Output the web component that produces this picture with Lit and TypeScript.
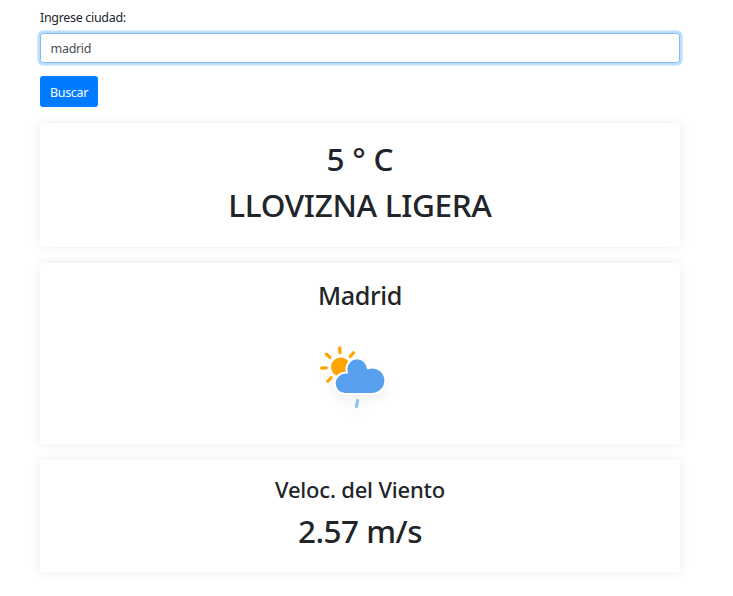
import { LitElement, html, css, svg } from "lit";
import { customElement, property } from "lit/decorators.js";

const RAYS = [0, 45, 90, 135, 180, 225, 270, 315];

@customElement("weather-icon")
class WeatherIcon extends LitElement {
  static styles = css`
    :host {
      display: block;
      width: 102.4px;
      height: 102.4px;
    }
    svg {
      display: block;
      width: 100%;
      height: 100%;
      overflow: visible;
    }
    .art {
      filter: drop-shadow(0 4px 3px rgba(0, 0, 0, 0.05));
    }
  `;
  render() {
    return html`<svg viewBox="0 0 64 64" aria-hidden="true">
      <g class="art">
        <g transform="translate(19.8 26.9) rotate(-3)">
          ${RAYS.map(
            (a) => svg`<line transform="rotate(${a})" y1="9" y2="12" stroke="#ffa500" stroke-width="2" stroke-linecap="round" />`
          )}
          <circle r="6" fill="#ffa500" />
        </g>
        <path
          d="M47.7,35.4c0-4.6-3.7-8.2-8.2-8.2c-1,0-1.9,0.2-2.8,0.5c-0.3-3.4-3.1-6.2-6.6-6.2c-3.7,0-6.7,3-6.7,6.7c0,0.8,0.2,1.6,0.4,2.3c-0.3-0.1-0.7-0.1-1-0.1c-3.7,0-6.7,3-6.7,6.7c0,3.6,2.9,6.6,6.5,6.7l17.2,0C44.2,43.3,47.7,39.8,47.7,35.4z"
          fill="#57a0ee"
          stroke="#fff"
          stroke-width="1.2"
          stroke-linejoin="round"
        />
        <line x1="30.4" y1="47.8" x2="29.6" y2="51.6" stroke="#91c0f8" stroke-width="2" stroke-linecap="round" />
      </g>
    </svg>`;
  }
}

@customElement("app-root")
class AppRoot extends LitElement {
  @property() query = "madrid";

  static styles = css`
    :host {
      display: block;
      box-sizing: border-box;
      width: 733px;
      height: 596px;
      overflow: hidden;
      background: #fff;
      color: #212529;
      font: 400 12.8px/19.2px "Noto Sans", "Open Sans", sans-serif;
    }
    * {
      box-sizing: border-box;
    }
    main {
      width: 640px;
      margin-left: 40px;
      padding-top: 8px;
    }
    form {
      display: flex;
      flex-direction: column;
      align-items: flex-start;
    }
    label {
      height: 25px;
      font-size: 12.5px;
      letter-spacing: -0.32px;
    }
    input {
      width: 640px;
      height: 30px;
      padding: 0 9.6px;
      border: 1px solid #80bdff;
      border-radius: 3.2px;
      outline: 0;
      background: #fff;
      color: #495057;
      font: inherit;
      font-size: 12.5px;
      letter-spacing: -0.32px;
      box-shadow: 0 0 0 2.6px rgba(0, 123, 255, 0.25);
    }
    button {
      width: 58px;
      height: 31px;
      margin: 13px 0 16px;
      padding: 2px 0 0;
      border: 0;
      border-radius: 3.2px;
      background: #007bff;
      color: #fff;
      font: inherit;
      font-size: 12.5px;
      letter-spacing: -0.35px;
    }
    .card {
      display: flex;
      flex-direction: column;
      align-items: center;
      margin-bottom: 16px;
      border-radius: 3.2px;
      background: #fff;
      box-shadow: 0 0 12px rgba(0, 0, 0, 0.08);
      white-space: nowrap;
    }
    .now {
      height: 124px;
      padding-top: 17px;
    }
    .city {
      height: 181px;
      padding-top: 17px;
    }
    .wind {
      height: 112px;
      padding-top: 16px;
    }
    h1,
    h2,
    h3 {
      margin: 0;
      font-weight: 500;
    }
    h1 {
      font-size: 31.5px;
      line-height: 38px;
    }
    .now h1 + h1 {
      margin-top: 8px;
    }
    .temp {
      letter-spacing: -0.2px;
    }
    .sky {
      letter-spacing: -0.33px;
    }
    .speed {
      letter-spacing: -0.5px;
    }
    h2 {
      font-size: 25.2px;
      line-height: 31px;
      letter-spacing: -0.4px;
    }
    h3 {
      font-size: 22px;
      line-height: 27px;
      margin-bottom: 9px;
      letter-spacing: -0.2px;
    }
    weather-icon {
      margin-top: 13.4px;
    }
  `;

  render() {
    return html`<main>
      <form @submit=${(e: Event) => e.preventDefault()}>
        <label for="city">Ingrese ciudad:</label>
        <input id="city" .value=${this.query} autocomplete="off" spellcheck="false" />
        <button type="submit">Buscar</button>
      </form>
      <section class="card now">
        <h1 class="temp">5 ° C</h1>
        <h1 class="sky">LLOVIZNA LIGERA</h1>
      </section>
      <section class="card city">
        <h2>Madrid</h2>
        <weather-icon></weather-icon>
      </section>
      <section class="card wind">
        <h3>Veloc. del Viento</h3>
        <h1 class="speed">2.57 m/s</h1>
      </section>
    </main>`;
  }
}
